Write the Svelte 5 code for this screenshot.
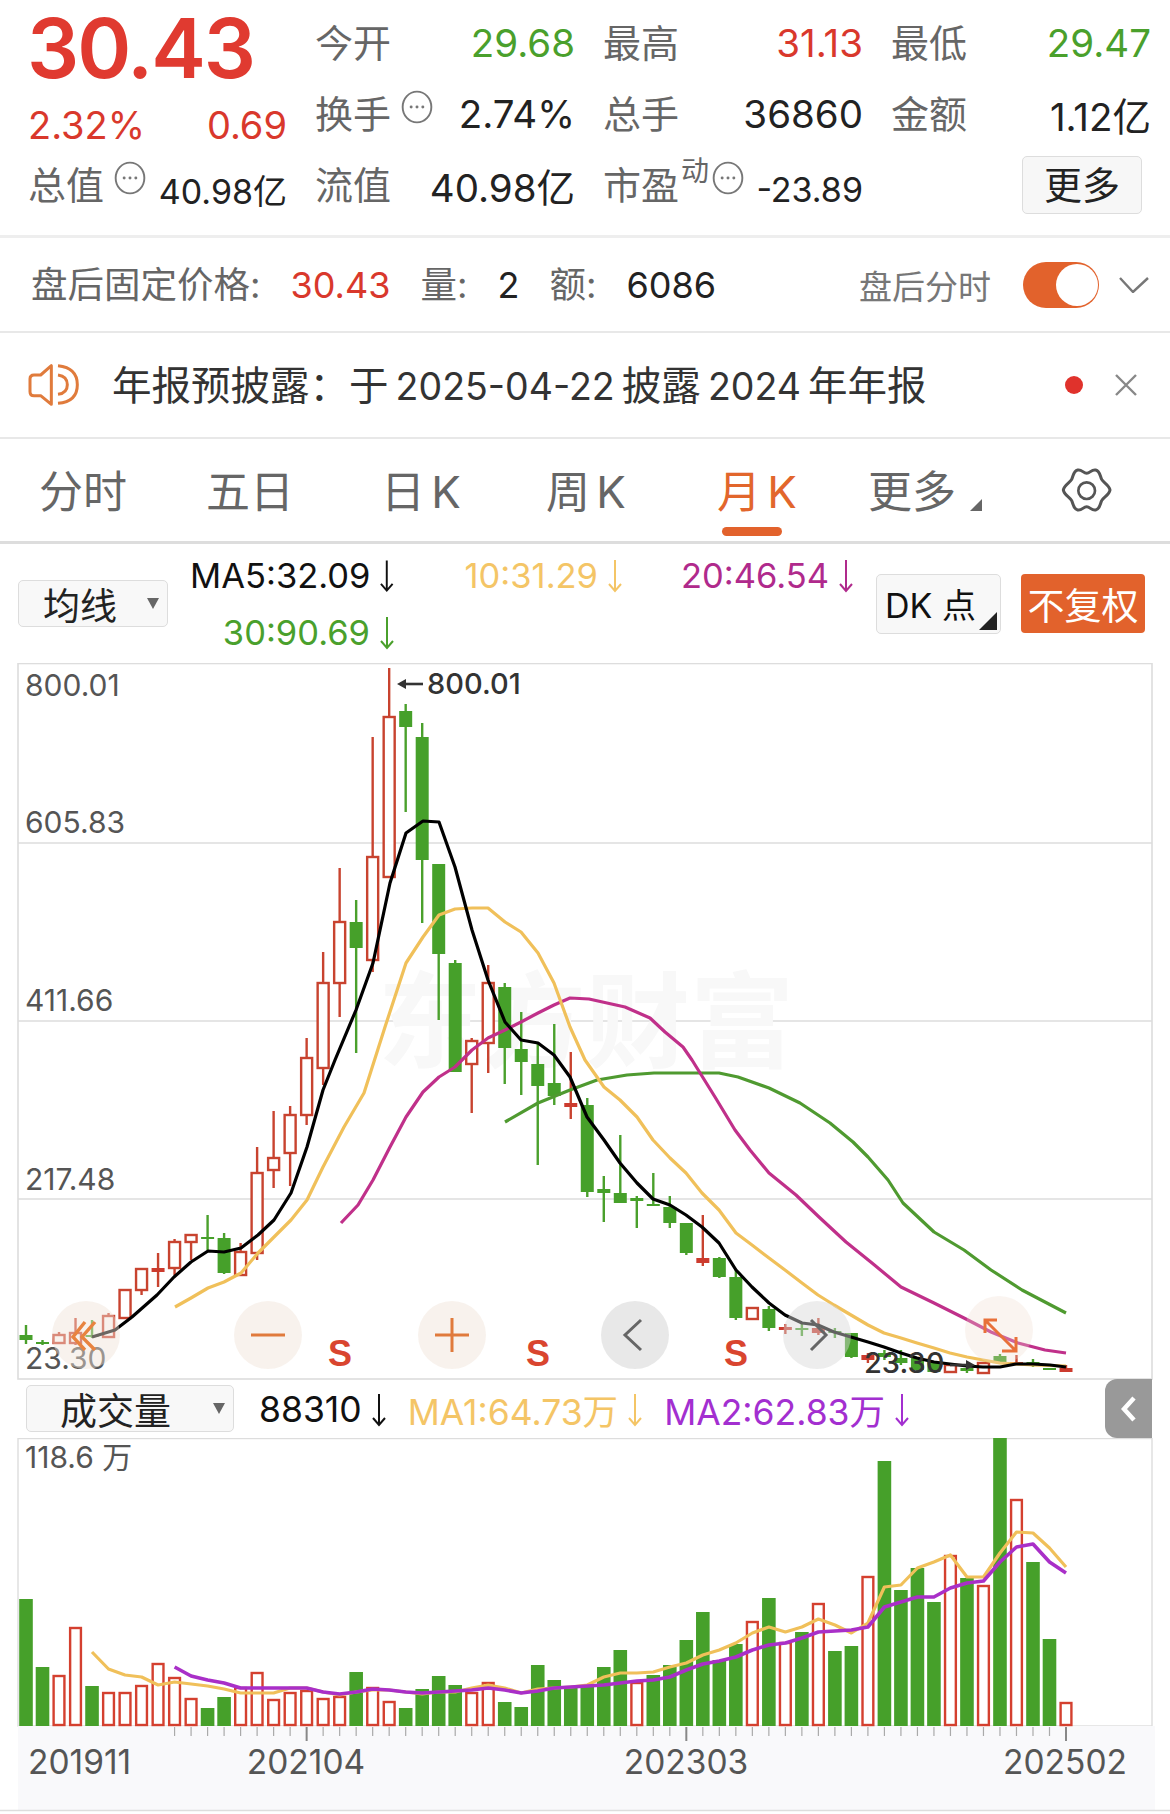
<script>
	// candle: [kind, wickTop, bodyTop, bodyBottom, wickBottom], r = hollow red, R = solid red, g = green
	const candles = [
		['g', 1325, 1335, 1340, 1344], ['g', 1340, 1342, 1344, 1345], ['r', 1332, 1335, 1343, 1343], ['r', 1318, 1333, 1343, 1345],
		['g', 1320, 1335, 1337, 1338], ['r', 1313, 1316, 1337, 1337], ['r', 1290, 1290, 1318, 1318], ['r', 1269, 1269, 1290, 1295],
		['R', 1253, 1268, 1272, 1287], ['r', 1239, 1242, 1268, 1275], ['r', 1234, 1235, 1242, 1260], ['g', 1215, 1237, 1239, 1250],
		['g', 1233, 1238, 1273, 1274], ['r', 1243, 1252, 1275, 1275], ['r', 1147, 1173, 1253, 1260], ['r', 1111, 1158, 1170, 1188],
		['r', 1106, 1115, 1153, 1186], ['r', 1038, 1058, 1115, 1125], ['r', 952, 983, 1068, 1085], ['r', 868, 922, 983, 1017],
		['g', 900, 922, 948, 1053], ['r', 737, 857, 960, 972], ['r', 668, 717, 877, 878], ['g', 704, 711, 727, 812],
		['g', 723, 737, 860, 923], ['g', 864, 864, 954, 1020], ['g', 960, 963, 1072, 1072], ['r', 1038, 1041, 1064, 1113],
		['r', 965, 983, 1043, 1073], ['g', 983, 987, 1048, 1084], ['g', 1012, 1049, 1062, 1095], ['g', 1042, 1064, 1086, 1165],
		['g', 1024, 1083, 1096, 1105], ['R', 1052, 1103, 1107, 1119], ['g', 1098, 1105, 1192, 1197], ['g', 1176, 1189, 1193, 1222],
		['g', 1135, 1193, 1203, 1203], ['g', 1196, 1198, 1201, 1228], ['g', 1173, 1204, 1206, 1206], ['g', 1196, 1207, 1223, 1228],
		['g', 1223, 1223, 1253, 1255], ['R', 1215, 1258, 1263, 1266], ['g', 1257, 1258, 1277, 1278], ['g', 1270, 1277, 1318, 1320],
		['r', 1308, 1308, 1319, 1319], ['g', 1306, 1309, 1328, 1331], ['R', 1324, 1327, 1330, 1334], ['g', 1323, 1328, 1330, 1336],
		['R', 1318, 1328, 1333, 1335], ['g', 1328, 1331, 1333, 1338], ['g', 1333, 1333, 1357, 1358], ['R', 1353, 1355, 1360, 1363],
		['g', 1350, 1353, 1357, 1360], ['g', 1350, 1358, 1363, 1365], ['g', 1358, 1358, 1370, 1371], ['g', 1362, 1362, 1372, 1372],
		['r', 1365, 1365, 1372, 1372], ['g', 1365, 1368, 1371, 1373], ['r', 1363, 1363, 1373, 1373], ['g', 1354, 1356, 1362, 1363],
		['R', 1355, 1362, 1364, 1365], ['g', 1359, 1362, 1364, 1367], ['g', 1368, 1368, 1370, 1370], ['R', 1365, 1368, 1372, 1372]
	];

	const volumes = [
		['g', 1599], ['g', 1667], ['r', 1676], ['r', 1628], ['g', 1686], ['r', 1693], ['r', 1693], ['r', 1686],
		['r', 1664], ['r', 1678], ['r', 1699], ['g', 1708], ['g', 1697], ['r', 1688], ['r', 1673], ['r', 1700],
		['r', 1693], ['r', 1691], ['r', 1699], ['r', 1697], ['g', 1672], ['r', 1688], ['r', 1702], ['g', 1708],
		['g', 1689], ['g', 1676], ['g', 1685], ['r', 1693], ['r', 1683], ['g', 1702], ['g', 1707], ['g', 1665],
		['g', 1680], ['g', 1687], ['g', 1687], ['g', 1667], ['g', 1650], ['r', 1683], ['g', 1675], ['g', 1665],
		['g', 1640], ['g', 1612], ['g', 1660], ['g', 1644], ['r', 1622], ['g', 1598], ['r', 1643], ['g', 1632],
		['r', 1604], ['g', 1651], ['g', 1646], ['r', 1577], ['g', 1461], ['g', 1590], ['g', 1568], ['g', 1602],
		['r', 1556], ['g', 1578], ['r', 1586], ['g', 1438], ['r', 1500], ['g', 1562], ['g', 1639], ['r', 1703]
	];

	const ma5 = '92,1337 115,1330 132,1317 157,1295 174,1277 191,1262 208,1251 224,1252 241,1248 258,1235 274,1220 291,1193 307,1147 323,1090 335,1060 356,1010 373,963 390,883 406,833 423,821 439,822 455,867 472,930 488,980 505,1022 521,1040 538,1043 554,1055 570,1077 587,1117 604,1140 620,1163 637,1183 653,1199 670,1205 686,1215 702,1227 719,1243 736,1270 752,1287 769,1303 785,1315 802,1323 818,1325 834,1332 851,1337 868,1342 884,1347 901,1353 917,1358 934,1362 950,1364 967,1366 983,1367 1000,1367 1016,1364 1033,1364 1050,1365 1066,1367';
	const ma10 = '175,1307 191,1298 208,1288 224,1282 241,1273 258,1253 274,1237 291,1220 307,1200 323,1167 344,1127 364,1093 385,1027 406,963 423,937 439,915 455,909 472,908 488,908 505,922 521,932 538,953 554,983 570,1027 585,1060 604,1087 620,1100 637,1117 653,1140 670,1158 686,1173 702,1193 719,1210 736,1233 752,1245 769,1258 785,1270 802,1283 818,1295 834,1305 851,1315 868,1325 884,1333 901,1338 917,1343 934,1348 950,1353 967,1357 983,1360 1000,1363 1016,1364 1033,1365 1066,1366';
	const ma20 = '341,1223 358,1205 373,1180 390,1147 406,1117 423,1092 439,1077 455,1067 472,1050 488,1038 505,1030 521,1022 538,1013 554,1005 570,998 589,999 625,1007 650,1018 665,1032 683,1047 692,1060 715,1097 735,1130 750,1150 769,1173 796,1195 819,1217 846,1242 872,1263 901,1287 934,1303 964,1318 991,1332 1018,1343 1045,1350 1066,1353';
	const ma30 = '505,1122 538,1103 570,1090 597,1080 627,1075 654,1073 685,1073 719,1073 738,1077 769,1088 800,1103 830,1123 853,1142 868,1157 888,1180 903,1203 934,1232 964,1250 991,1270 1022,1290 1066,1313';

	const volMa1 = [1652, 1669, 1675, 1677, 1685, 1682, 1684, 1686, 1689, 1693, 1693, 1693, 1688, 1688, 1692, 1695, 1692, 1690, 1690, 1692, 1694, 1692, 1692, 1688, 1685, 1688, 1693, 1689, 1688, 1687, 1685, 1677, 1673, 1673, 1672, 1667, 1663, 1655, 1650, 1643, 1633, 1627, 1632, 1627, 1619, 1625, 1633, 1623, 1587, 1585, 1568, 1562, 1555, 1577, 1577, 1553, 1532, 1533, 1548, 1567];
	const volMa2 = [1667, 1676, 1680, 1683, 1688, 1688, 1688, 1688, 1688, 1692, 1694, 1692, 1689, 1690, 1692, 1693, 1692, 1691, 1690, 1688, 1690, 1693, 1691, 1688, 1687, 1686, 1685, 1683, 1681, 1680, 1677, 1670, 1664, 1661, 1657, 1650, 1645, 1643, 1638, 1632, 1631, 1630, 1627, 1607, 1602, 1597, 1597, 1588, 1583, 1581, 1562, 1547, 1544, 1562, 1573];

	const xAt = (i) => 26 + i * 16.508;
	const line = (ys, from) => ys.map((y, i) => `${xAt(i + from).toFixed(1)},${y}`).join(' ');

	const tabs = ['分时', '五日', '日 K', '周 K', '月 K', '更多'];
	const priceLabels = [['800.01', 696], ['605.83', 833], ['411.66', 1011], ['217.48', 1190], ['23.30', 1369]];
	const gridYs = [843, 1021, 1199];
	const ticks = Array.from({ length: 55 }, (_, i) => i + 9);
	const majorTicks = [17, 40, 63];
	const sSignals = [340, 538, 736];
</script>

{#snippet dots()}
	<svg class="dots" viewBox="0 0 30 32" aria-hidden="true">
		<ellipse cx="15" cy="16" rx="13.5" ry="14.5" fill="none" stroke="#777" stroke-width="1.8" />
		<circle cx="9.5" cy="16" r="1.4" fill="#777" />
		<circle cx="15" cy="16" r="1.4" fill="#777" />
		<circle cx="20.5" cy="16" r="1.4" fill="#777" />
	</svg>
{/snippet}

{#snippet down()}
	<svg class="down" viewBox="0 0 16 34" aria-hidden="true">
		<path d="M8 1V32M2 25L8 32L14 25" fill="none" stroke="currentColor" stroke-width="2" />
	</svg>
{/snippet}

<div class="page">
	<section class="quote">
		<div class="price-cell">
			<div class="price">30.43</div>
			<div class="change"><span>2.32%</span><span>0.69</span></div>
		</div>
		<div class="cell"><span class="label">今开</span><span class="value green">29.68</span></div>
		<div class="cell"><span class="label">最高</span><span class="value red">31.13</span></div>
		<div class="cell"><span class="label">最低</span><span class="value green">29.47</span></div>

		<div class="cell"><span class="label">换手</span>{@render dots()}<span class="value push">2.74%</span></div>
		<div class="cell"><span class="label">总手</span><span class="value">36860</span></div>
		<div class="cell"><span class="label">金额</span><span class="value">1.12亿</span></div>

		<div class="cell"><span class="label">总值</span>{@render dots()}<span class="value small push">40.98亿</span></div>
		<div class="cell"><span class="label">流值</span><span class="value">40.98亿</span></div>
		<div class="cell"><span class="label">市盈</span><sup class="sup">动</sup>{@render dots()}<span class="value small push">-23.89</span></div>
		<div class="cell end"><button class="more">更多</button></div>
	</section>

	<section class="after-hours">
		<span class="ah-label">盘后固定价格:</span>
		<span class="ah-num red">30.43</span>
		<span class="ah-label vol">量:</span>
		<span class="ah-num">2</span>
		<span class="ah-label vol">额:</span>
		<span class="ah-num">6086</span>
		<span class="ah-switch">盘后分时</span>
		<div class="toggle"><div class="knob"></div></div>
		<svg class="chev" viewBox="0 0 30 16" aria-hidden="true"><path d="M1 1L14 15L29 1" fill="none" stroke="#777" stroke-width="2.4" /></svg>
	</section>

	<section class="notice">
		<svg class="speaker" viewBox="0 0 240 180" aria-hidden="true">
			<path d="M48 60H68L100 32V148L68 122H48Q36 122 36 110V72Q36 60 48 60Z" fill="none" stroke="#e07b3c" stroke-width="9" stroke-linejoin="round" />
			<path d="M120 60Q148 64 148 89Q148 114 120 118M120 32Q178 38 178 89Q178 140 120 145" fill="none" stroke="#e07b3c" stroke-width="9" />
		</svg>
		<span class="notice-text">年报预披露：于 <span class="digits">2025-04-22</span> 披露 <span class="digits">2024</span> 年年报</span>
		<span class="dot"></span>
		<svg class="close" viewBox="0 0 24 24" aria-hidden="true"><path d="M2 2L22 22M22 2L2 22" stroke="#888" stroke-width="2.4" /></svg>
	</section>

	<nav class="tabs">
		{#each tabs as tab, i}
			<div class="tab tab-{i}" class:active={tab === '月 K'}>
				{tab}
				{#if tab === '更多'}<span class="tri small-tri"></span>{/if}
			</div>
		{/each}
		<svg class="gear" viewBox="0 0 240 180" aria-hidden="true">
			<path d="M110 40C120 40 125 27 137 30C150 33 150 48 155 58C160 68 178 75 180 90C178 105 160 112 155 122C150 132 150 147 137 150C125 153 120 140 110 140C100 140 95 153 83 150C70 147 70 132 65 122C60 112 42 105 40 90C42 75 60 68 65 58C70 48 70 33 83 30C95 27 100 40 110 40Z" fill="none" stroke="#555" stroke-width="9" />
			<circle cx="110" cy="92" r="25" fill="none" stroke="#555" stroke-width="8" />
		</svg>
	</nav>

	<section class="ma-bar">
		<div class="select ma-select"><span>均线</span><i class="caret"></i></div>
		<div class="legend">
			<span class="ma black">MA5:32.09{@render down()}</span>
			<span class="ma yellow">10:31.29{@render down()}</span>
			<span class="ma magenta">20:46.54{@render down()}</span>
			<span class="ma green">30:90.69{@render down()}</span>
		</div>
		<button class="dk">DK 点<span class="tri"></span></button>
		<button class="restore">不复权</button>
	</section>

	<svg class="kline" viewBox="0 663 1170 717" aria-label="K线图">
		<rect x="18" y="663.5" width="1134" height="715.5" fill="#fff" stroke="#ddd" stroke-width="1.6" />
		{#each gridYs as y}
			<line x1="18" x2="1152" y1={y} y2={y} stroke="#ddd" stroke-width="1.4" />
		{/each}
		<text class="watermark" x="378" y="1060">东方财富</text>
		{#each priceLabels as [text, y]}
			<text class="axis" x="25" {y}>{text}</text>
		{/each}

		{#each candles as [kind, wickTop, top, bottom, wickBottom], i}
			<line x1={xAt(i)} x2={xAt(i)} y1={wickTop} y2={wickBottom} stroke={kind === 'g' ? '#4aa02c' : '#c8432f'} stroke-width="2.4" />
			{#if kind === 'r'}
				<rect x={xAt(i) - 5.5} y={top} width="11" height={bottom - top} fill="#fff" stroke="#c8432f" stroke-width="2.4" />
			{:else}
				<rect x={xAt(i) - 6.5} y={top} width="13" height={bottom - top} fill={kind === 'g' ? '#46a02a' : '#cc3b2e'} />
			{/if}
		{/each}

		<polyline points={ma30} class="ma-line" stroke="#4f9a30" />
		<polyline points={ma20} class="ma-line" stroke="#c0308a" />
		<polyline points={ma10} class="ma-line" stroke="#f0c05a" />
		<polyline points={ma5} class="ma-line" stroke="#000" />

		<line x1="400" x2="423" y1="684" y2="684" stroke="#333" stroke-width="2.6" />
		<path d="M397 684L406 679V689Z" fill="#333" />
		<text class="mark" x="427" y="694">800.01</text>
		<text class="mark" x="864" y="1373">23.30</text>
		<line x1="950" x2="970" y1="1365" y2="1365" stroke="#333" stroke-width="2.6" />
		<path d="M975 1365L966 1360V1370Z" fill="#333" />

		<circle cx="86" cy="1335" r="34" fill="#efe2d8" opacity="0.45" />
		<path d="M85 1322L73 1337L85 1350M95 1322L82 1337L95 1350" fill="none" stroke="#e8833f" stroke-width="3.4" />
		<circle cx="268" cy="1335" r="34" fill="#efe2d8" opacity="0.45" />
		<path d="M251 1335H285" stroke="#e07a3c" stroke-width="3" />
		<circle cx="452" cy="1335" r="34" fill="#efe2d8" opacity="0.45" />
		<path d="M435 1335H469M452 1318V1352" stroke="#e07a3c" stroke-width="3" />
		<circle cx="635" cy="1335" r="34" fill="#d8d8d8" opacity="0.6" />
		<path d="M641 1320L625 1335L641 1350" fill="none" stroke="#666" stroke-width="3" />
		<circle cx="817" cy="1335" r="34" fill="#d8d8d8" opacity="0.45" />
		<path d="M811 1320L826 1335L811 1350" fill="none" stroke="#666" stroke-width="3" />
		<circle cx="999" cy="1330" r="34" fill="#f0dccd" opacity="0.3" />
		<path d="M997 1320H985V1333M985 1320L1016 1351M1002 1351H1016V1337" fill="none" stroke="#e8703a" stroke-width="3" />
		{#each sSignals as x}
			<text class="signal" {x} y="1366">S</text>
		{/each}
	</svg>

	<section class="vol-bar">
		<div class="select vol-select"><span>成交量</span><i class="caret"></i></div>
		<span class="ma black vol-num">88310{@render down()}</span>
		<span class="ma yellow vol-ma">MA1:64.73万{@render down()}</span>
		<span class="ma purple vol-ma">MA2:62.83万{@render down()}</span>
		<div class="side-tab">
			<svg viewBox="0 0 16 28" aria-hidden="true"><path d="M13 3L3 14L13 25" fill="none" stroke="#fff" stroke-width="4.5" /></svg>
		</div>
	</section>

	<svg class="volume" viewBox="0 1438 1170 376" aria-label="成交量图">
		<rect x="18" y="1438.5" width="1134" height="287.5" fill="#fff" stroke="#ddd" stroke-width="1.4" />
		<rect x="18" y="1726" width="1137" height="84" fill="#f9f9fb" />
		<line x1="0" x2="1170" y1="1810.5" y2="1810.5" stroke="#ddd" stroke-width="1.6" />
		<text class="axis" x="25" y="1468">118.6 万</text>

		{#each volumes as [kind, top], i}
			{#if kind === 'g'}
				<rect x={xAt(i) - 6.8} y={top} width="13.6" height={1726 - top} fill="#46a02a" />
			{:else}
				<rect x={xAt(i) - 5.4} y={top} width="10.8" height={1725 - top} fill="#fff" stroke="#d4402f" stroke-width="2.4" />
			{/if}
		{/each}
		<polyline points={line(volMa1, 4)} class="ma-line" stroke="#f0c05a" />
		<polyline points={line(volMa2, 9)} class="ma-line thick" stroke="#a92fc8" />

		{#each ticks as i}
			<line x1={xAt(i)} x2={xAt(i)} y1="1727" y2={majorTicks.includes(i) ? 1741 : 1736} stroke={majorTicks.includes(i) ? '#888' : '#aaa'} stroke-width={majorTicks.includes(i) ? 2 : 1.2} />
		{/each}
		<text class="axis date" x="28" y="1774">201911</text>
		<text class="axis date mid" x="306" y="1774">202104</text>
		<text class="axis date mid" x="686" y="1774">202303</text>
		<text class="axis date mid" x="1065" y="1774">202502</text>
	</svg>
</div>

<style>
	:global(body) {
		margin: 0;
		background: #fff;
	}

	.page {
		width: 1170px;
		height: 1814px;
		overflow: hidden;
		font-family: Inter, 'Noto Sans CJK SC', sans-serif;
		color: #222;
	}

	.red {
		color: #d9382c;
	}

	.green {
		color: #4aa02c;
	}

	.quote {
		box-sizing: border-box;
		height: 238px;
		padding: 7px 20px 0 30px;
		display: grid;
		grid-template-columns: 257px 258px 258px 258px;
		grid-template-rows: 71px 72px 70px;
		column-gap: 30px;
		border-bottom: 3px solid #eee;
	}

	.price-cell {
		grid-row: 1 / span 2;
	}

	.price {
		margin-left: -3px;
		font-size: 82px;
		font-weight: 600;
		letter-spacing: -2px;
		line-height: 84px;
		color: #e03a30;
	}

	.change {
		display: flex;
		justify-content: space-between;
		margin: 12px 0 0 -2px;
		font-size: 38px;
		line-height: 44px;
		color: #d9382c;
	}

	.cell {
		display: flex;
		align-items: center;
		justify-content: space-between;
	}

	.cell.end {
		justify-content: flex-end;
	}

	.label {
		margin: -5px 0 0 -2px;
		font-size: 38px;
		color: #666;
	}

	.value {
		font-size: 38.5px;
	}

	.value.small {
		font-size: 34px;
		margin-top: 8px;
	}

	.push {
		margin-left: auto;
	}

	.dots {
		width: 32px;
		height: 34px;
		margin: -14px 0 0 10px;
	}

	.sup {
		font-size: 28px;
		color: #666;
		margin: -28px 0 0 2px;
		line-height: 1;
	}

	.sup + .dots {
		margin-left: 3px;
	}

	.more {
		width: 120px;
		height: 58px;
		margin-right: 9px;
		padding: 0;
		background: #f7f7f7;
		border: 1.5px solid #ddd;
		border-radius: 5px;
		font: inherit;
		font-size: 38px;
		line-height: 1;
		color: #222;
	}

	.after-hours {
		box-sizing: border-box;
		height: 95px;
		padding-left: 31px;
		display: flex;
		align-items: center;
		border-bottom: 2px solid #e8e8e8;
	}

	.ah-label {
		margin-top: -4px;
		font-size: 36.5px;
		color: #666;
	}

	.ah-num {
		font-size: 36px;
		margin-left: 30px;
	}

	.ah-label.vol {
		margin-left: 30px;
	}

	.ah-switch {
		margin-left: auto;
		font-size: 33px;
		color: #777;
	}

	.toggle {
		box-sizing: border-box;
		width: 76px;
		height: 46px;
		margin-left: 32px;
		padding-right: 1px;
		display: flex;
		align-items: center;
		justify-content: flex-end;
		background: #e2622c;
		border-radius: 23px;
	}

	.knob {
		width: 42px;
		height: 42px;
		background: #fff;
		border-radius: 50%;
	}

	.chev {
		width: 30px;
		height: 16px;
		margin: 0 21px 0 20px;
	}

	.notice {
		box-sizing: border-box;
		height: 106px;
		display: flex;
		align-items: center;
		padding-left: 18px;
		border-bottom: 2px solid #e8e8e8;
	}

	.speaker {
		width: 80px;
		height: 60px;
	}

	.notice-text {
		margin: -6px 0 0 14px;
		font-size: 39.5px;
		word-spacing: -4px;
		color: #333;
		white-space: nowrap;
	}

	.digits {
		font-size: 37.5px;
	}

	.dot {
		width: 18px;
		height: 18px;
		margin-left: auto;
		background: #e0322c;
		border-radius: 50%;
	}

	.close {
		width: 24px;
		height: 24px;
		margin: 0 32px 0 31px;
	}

	.tabs {
		box-sizing: border-box;
		position: relative;
		height: 105px;
		display: flex;
		align-items: center;
		padding-left: 39px;
		border-bottom: 3px solid #ddd;
	}

	.tab {
		position: relative;
		width: 167px;
		font-size: 44px;
		word-spacing: -6px;
		color: #666;
		line-height: 1;
		margin-top: 3px;
		white-space: nowrap;
	}

	.tab.tab-1 {
		width: 175px;
	}

	.tab.tab-2 {
		width: 165px;
	}

	.tab.tab-3 {
		width: 171px;
	}

	.tab.tab-4 {
		width: 151px;
	}

	.tab.tab-5 {
		width: 182px;
	}

	.tab.active {
		color: #e2662c;
	}

	.tab.active::after {
		content: '';
		position: absolute;
		left: 5px;
		top: 57px;
		width: 60px;
		height: 9px;
		background: #e2622c;
		border-radius: 5px;
	}

	.tri {
		position: absolute;
		right: 3px;
		bottom: 3px;
		border-style: solid;
		border-width: 0 0 18px 18px;
		border-color: transparent transparent #222 transparent;
	}

	.tri.small-tri {
		right: 68px;
		bottom: 3px;
		border-width: 0 0 12px 12px;
		border-color: transparent transparent #666 transparent;
	}

	.gear {
		width: 80px;
		height: 60px;
	}

	.ma-bar {
		box-sizing: border-box;
		height: 119px;
		display: flex;
		align-items: center;
		padding-left: 18px;
	}

	.select {
		box-sizing: border-box;
		position: relative;
		display: flex;
		align-items: center;
		background: #f8f8f8;
		border: 1.5px solid #ddd;
		border-radius: 5px;
		font-size: 37px;
		color: #222;
	}

	.ma-select {
		width: 150px;
		height: 47px;
		padding-left: 24px;
	}

	.vol-select {
		width: 208px;
		height: 47px;
		padding-left: 33px;
	}

	.caret {
		position: absolute;
		right: 8px;
		top: 50%;
		margin-top: -6px;
		border-style: solid;
		border-width: 11px 6.5px 0 6.5px;
		border-color: #666 transparent transparent transparent;
	}

	.legend {
		width: 686px;
		margin-left: 22px;
		display: grid;
		grid-template-columns: 205px 228px 231px;
		grid-auto-rows: 57px;
		margin-top: 1px;
	}

	.ma {
		display: inline-flex;
		align-items: center;
		justify-content: flex-end;
		font-size: 34.5px;
		white-space: nowrap;
	}

	.down {
		width: 16px;
		height: 34px;
		margin-left: 9px;
	}

	.black {
		color: #111;
	}

	.yellow {
		color: #f4c566;
	}

	.magenta {
		color: #b02a8c;
	}

	.purple {
		color: #a32fd0;
	}

	.dk {
		box-sizing: border-box;
		position: relative;
		width: 125px;
		height: 60px;
		padding: 0 0 0 8px;
		text-align: left;
		background: #f8f8f8;
		border: 1.5px solid #ddd;
		border-radius: 5px;
		font: inherit;
		font-size: 34px;
		color: #111;
	}

	.restore {
		width: 124px;
		height: 59px;
		margin-left: 20px;
		padding: 0;
		background: #e2622c;
		border: none;
		border-radius: 4px;
		font: inherit;
		font-size: 37px;
		color: #fff;
	}

	.kline,
	.volume {
		display: block;
		width: 1170px;
	}

	.kline {
		height: 717px;
		margin-bottom: -1px;
	}

	.volume {
		height: 376px;
	}

	.axis {
		font-size: 30px;
		fill: #555;
	}

	.date {
		font-size: 33.5px;
	}

	.mid {
		text-anchor: middle;
	}

	.mark {
		font-size: 29px;
		font-weight: 500;
		fill: #333;
	}

	.signal {
		font-family: 'Liberation Sans', sans-serif;
		font-size: 36px;
		font-weight: 700;
		text-anchor: middle;
		fill: #d9452f;
	}

	.watermark {
		font-size: 104px;
		font-weight: 700;
		fill: #f8f8f8;
	}

	.ma-line {
		fill: none;
		stroke-width: 3.2;
		stroke-linejoin: round;
	}

	.ma-line.thick {
		stroke-width: 3.6;
	}

	.vol-bar {
		box-sizing: border-box;
		position: relative;
		height: 59px;
		display: flex;
		align-items: center;
		padding-left: 26px;
	}

	.vol-bar .ma {
		font-size: 35.5px;
		margin-top: 2px;
	}

	.vol-num {
		margin-left: 25px;
	}

	.vol-ma {
		margin-left: 21px;
	}

	.side-tab {
		position: absolute;
		left: 1105px;
		top: 0;
		width: 47px;
		height: 59px;
		display: flex;
		align-items: center;
		justify-content: center;
		background: #999;
		border-radius: 12px 0 0 12px;
	}

	.side-tab svg {
		width: 16px;
		height: 28px;
	}
</style>
